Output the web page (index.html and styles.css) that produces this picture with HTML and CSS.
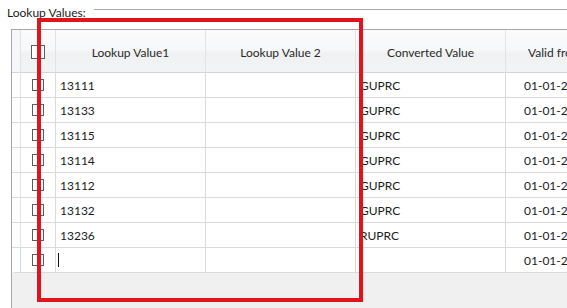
FILE: index.html
```html
<!DOCTYPE html>
<html>

<head>
    <title>Lookup Values</title>
    <link rel="stylesheet" href="styles.css">
</head>

<body>
    <div class="group">
        <div class="group-title">
            <span>Lookup Values:</span>
            <div class="rule"></div>
        </div>

        <div class="grid">
            <div class="row header">
                <div class="cell rowhead"></div>
                <div class="cell check"><span class="box big"></span></div>
                <div class="cell">Lookup Value1</div>
                <div class="cell">Lookup Value 2</div>
                <div class="cell">Converted Value</div>
                <div class="cell valid">Valid from</div>
            </div>

            <div class="row">
                <div class="cell rowhead"></div>
                <div class="cell check"><span class="box"></span></div>
                <div class="cell">13111</div>
                <div class="cell"></div>
                <div class="cell">GUPRC</div>
                <div class="cell valid">01-01-2020</div>
            </div>
            <div class="row">
                <div class="cell rowhead"></div>
                <div class="cell check"><span class="box"></span></div>
                <div class="cell">13133</div>
                <div class="cell"></div>
                <div class="cell">GUPRC</div>
                <div class="cell valid">01-01-2020</div>
            </div>
            <div class="row">
                <div class="cell rowhead"></div>
                <div class="cell check"><span class="box"></span></div>
                <div class="cell">13115</div>
                <div class="cell"></div>
                <div class="cell">GUPRC</div>
                <div class="cell valid">01-01-2020</div>
            </div>
            <div class="row">
                <div class="cell rowhead"></div>
                <div class="cell check"><span class="box"></span></div>
                <div class="cell">13114</div>
                <div class="cell"></div>
                <div class="cell">GUPRC</div>
                <div class="cell valid">01-01-2020</div>
            </div>
            <div class="row">
                <div class="cell rowhead"></div>
                <div class="cell check"><span class="box"></span></div>
                <div class="cell">13112</div>
                <div class="cell"></div>
                <div class="cell">GUPRC</div>
                <div class="cell valid">01-01-2020</div>
            </div>
            <div class="row">
                <div class="cell rowhead"></div>
                <div class="cell check"><span class="box"></span></div>
                <div class="cell">13132</div>
                <div class="cell"></div>
                <div class="cell">GUPRC</div>
                <div class="cell valid">01-01-2020</div>
            </div>
            <div class="row">
                <div class="cell rowhead"></div>
                <div class="cell check"><span class="box"></span></div>
                <div class="cell">13236</div>
                <div class="cell"></div>
                <div class="cell">RUPRC</div>
                <div class="cell valid">01-01-2020</div>
            </div>
            <div class="row new">
                <div class="cell rowhead"></div>
                <div class="cell check"><span class="box"></span></div>
                <div class="cell"><span class="caret"></span></div>
                <div class="cell"></div>
                <div class="cell"></div>
                <div class="cell valid">01-01-2020</div>
            </div>
        </div>
    </div>

    <!-- annotation drawn over the grid -->
    <div class="highlight"></div>
</body>

</html>
```

FILE: styles.css
```css
body {
    margin: 0;
    width: 567px;
    height: 308px;
    overflow: hidden;
    background-color: white;
    font-family: Lato, "Noto Sans", sans-serif;
    font-size: 12px;
    color: #1c1c1c;
    position: relative;
}

.group-title {
    display: flex;
    align-items: flex-start;
    height: 20px;
    padding-left: 7px;
}

.group-title span {
    line-height: 16px;
    margin-top: 5px;
}

.rule {
    flex: 1;
    margin-top: 9px;
    margin-left: 8px;
    border-top: 1px solid #a9a9a9;
}

.grid {
    margin-top: 9px;
    margin-left: 11px;
    height: 279px;
    border-left: 1px solid #a4a8ad;
    border-top: 1px solid #a4a8ad;
    background-color: #f0f0f0;
    overflow: hidden;
}

.row {
    display: grid;
    grid-template-columns: 9px 35px 150px 150px 150px 150px;
    height: 25px;
    background-color: white;
}

.cell {
    box-sizing: border-box;
    border-right: 1px solid #dadada;
    border-bottom: 1px solid #dadada;
    display: flex;
    align-items: center;
    padding-left: 4px;
    white-space: nowrap;
    overflow: hidden;
}

.rowhead {
    padding: 0;
    border-right-color: #e3e3e3;
}

.check {
    justify-content: center;
    padding: 0;
}

.valid {
    padding-left: 18px;
}

.header {
    height: 43px;
    background: linear-gradient(#fbfbfc, #f7f8f9 45%, #f0f1f2 55%, #f2f3f4);
    color: #2a2a2a;
}

.header .cell {
    justify-content: center;
    padding: 3px 0 0;
    border-right-color: #e2e3e5;
    border-bottom-color: #d5d5d5;
}

.header .rowhead {
    background-color: #f6f7f8;
}

.header .valid {
    justify-content: flex-start;
    padding-left: 22px;
}

.box {
    width: 12px;
    height: 12px;
    box-sizing: border-box;
    border: 1px solid #5c5c5c;
    background-color: white;
}

.box.big {
    width: 14px;
    height: 14px;
    margin-top: -2px;
}

.new .rowhead {
    border-left: 3px solid white;
    border-right-color: #c5def0;
}

.caret {
    display: block;
    width: 1px;
    height: 14px;
    margin-left: -2px;
    background-color: #111;
}

.highlight {
    position: absolute;
    left: 37px;
    top: 18px;
    width: 318px;
    height: 276px;
    border: 4px solid #e0141a;
}
```
